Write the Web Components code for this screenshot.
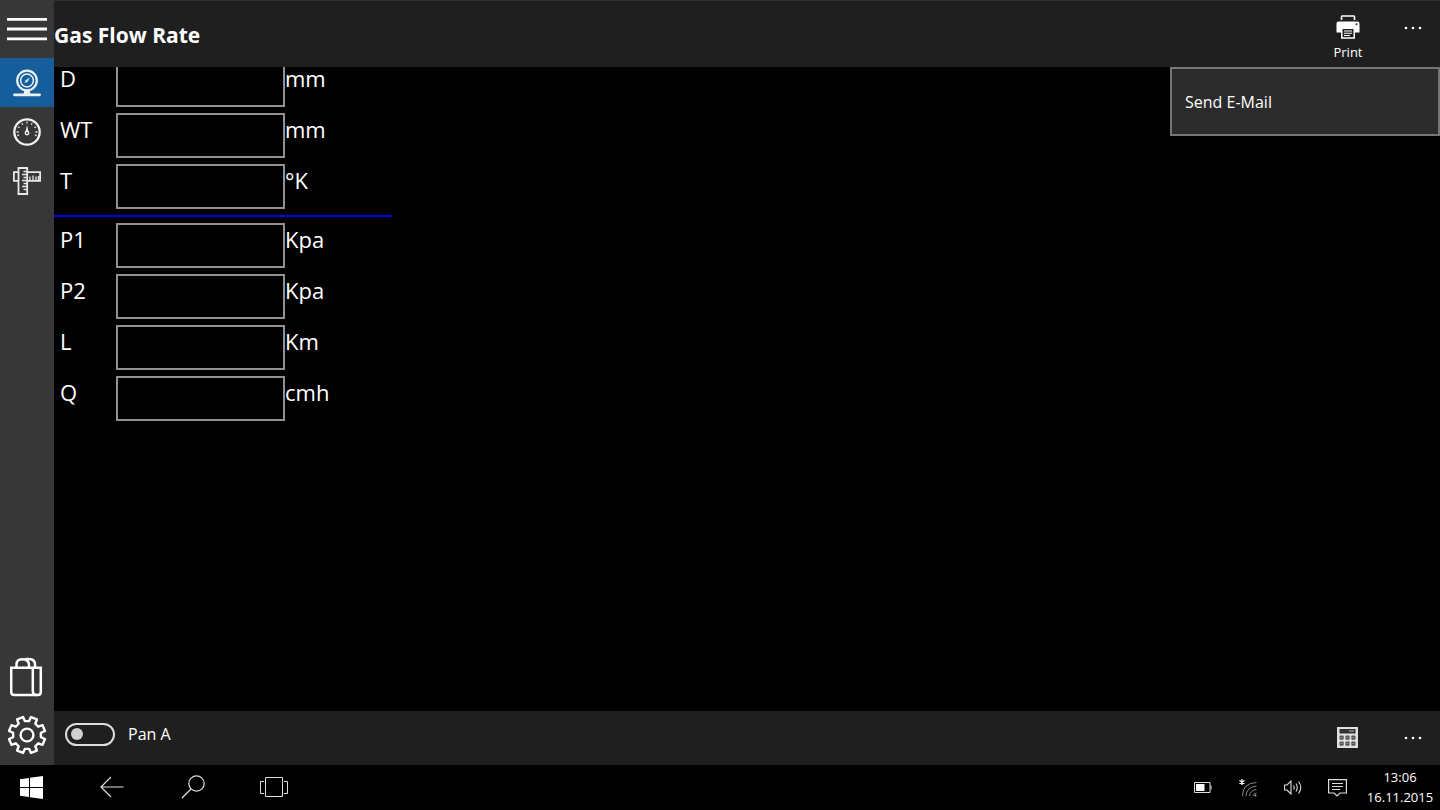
<!DOCTYPE html>
<html lang="en">
<head>
<meta charset="utf-8">
<title>Gas Flow Rate</title>
<style>
html,body{margin:0;height:100%;background:#000;color:#fff;font-family:"Open Sans","Noto Sans",sans-serif}
</style>
</head>
<body>
<gas-app></gas-app>
<script>
const define = (name, html, setup) => {
  const template = document.createElement('template');
  template.innerHTML = `<style>
    *{box-sizing:border-box}
    button{appearance:none;background:none;border:0;margin:0;padding:0;color:inherit;font:inherit;display:flex;align-items:center;justify-content:center}
    svg{display:block;flex:none}
  </style>` + html;
  customElements.define(name, class extends HTMLElement {
    constructor() {
      super();
      this.attachShadow({mode: 'open'}).append(template.content.cloneNode(true));
    }
    connectedCallback() { if (setup) setup(this, this.shadowRoot); }
  });
};

/* Outline of a cog: eight teeth with a notch at the top */
const cog = (c, outer, inner) => {
  const pts = [];
  for (let i = 0; i < 8; i++) {
    const mid = i * 45 + 22.5;
    [[-14, inner], [-10, outer], [10, outer], [14, inner]].forEach(([d, r]) => {
      const a = (mid + d - 90) * Math.PI / 180;
      pts.push((c + r * Math.cos(a)).toFixed(2) + ' ' + (c + r * Math.sin(a)).toFixed(2));
    });
  }
  return 'M' + pts.join('L') + 'Z';
};

/* Radial tick marks of a dial */
const ticks = (c, r1, r2, angles) => angles.map(deg => {
  const a = (deg - 90) * Math.PI / 180;
  const p = r => (c + r * Math.cos(a)).toFixed(2) + ' ' + (c + r * Math.sin(a)).toFixed(2);
  return 'M' + p(r1) + 'L' + p(r2);
}).join('');

define('nav-item', `
<style>
:host{display:block;height:49px}
:host([selected]){background:#165e9b}
:host([size=menu]){height:58px}
:host([size=large]){height:58px}
button{width:100%;height:100%}
</style>
<button><slot></slot></button>`,
(host, root) => root.querySelector('button').setAttribute('aria-label', host.getAttribute('name')));

define('nav-rail', `
<style>
:host{display:flex;flex-direction:column;width:54px;flex:none;background:#373737;padding-bottom:1px}
.grow{flex:1}
</style>
<nav-item name="Menu" size="menu">
  <svg width="40" height="24" viewBox="0 0 40 24"><path d="M0 2.4H40M0 12H40M0 21.8H40" stroke="#fff" stroke-width="2.8"/></svg>
</nav-item>
<nav-item name="Gas flow rate" selected>
  <svg width="28" height="28" viewBox="0 0 28 28" fill="none" stroke="#e9f2f9">
    <circle cx="14" cy="11.5" r="9.8" stroke-width="2.2"/><circle cx="14" cy="11.5" r="6.4" stroke-width="1.5"/>
    <path d="M11.5 14L12.3 11.2L17 8.3L14.8 12.9Z" fill="#b9d3e8" stroke="none"/>
    <path d="M11.5 21H16.5L17.5 25H10.5Z" fill="#e9f2f9" stroke="none"/><path d="M1.5 25.8H26.5" stroke-width="2.8" stroke-linecap="round"/>
  </svg>
</nav-item>
<nav-item name="Pressure">
  <svg width="28" height="28" viewBox="0 0 28 28" fill="none" stroke="#f2f2f2">
    <circle cx="14" cy="14" r="12.7" stroke-width="2.3"/>
    <path id="ticks" stroke-width="1.3" stroke="#ddd"/>
    <path d="M14 7L12.5 14H15.5Z" fill="#eee" stroke="none"/><circle cx="14" cy="15" r="1.7" stroke-width="1.4"/>
  </svg>
</nav-item>
<nav-item name="Dimensions">
  <svg width="28" height="28" viewBox="0 0 28 28" fill="none" stroke="#e8e8e8" stroke-width="1.8">
    <path d="M5.5 5.2H.9V13.8H5.5M14.2 5.2H27.1V13.8H14.2"/><path d="M5.5 1H14.2V27H5.5Z"/>
    <path d="M17 13.5V9.5M20 13.5V8.5M23 13.5V9.500M25.500 13.500V9M14 4.500H10.500M14 7.500H9M14 10.500H10.500M14 13.500H9M14 16.500H10.500M14 19.500H9M14 22.500H10.500" stroke-width="1.3"/>
  </svg>
</nav-item>
<div class="grow"></div>
<nav-item name="Store" size="large">
  <svg width="34" height="40" viewBox="1 0 34 40" fill="none" stroke="#fff" stroke-width="2.5">
    <path d="M2.200 10.800H31.800V35Q31.800 38 28.800 38H5.200Q2.200 38 2.200 35Z"/>
    <path d="M23.800 11V34Q23.800 38 27.800 38"/>
    <path d="M7.500 11V7.500Q7.500 2.200 13 2.200Q20 2.200 20 8V11M15.500 2.600Q17 1.800 20 2.100Q26 2.400 26 7.500V11"/>
  </svg>
</nav-item>
<nav-item name="Settings" size="large">
  <svg width="40" height="40" viewBox="0 0 40 40" fill="none" stroke="#fff" stroke-width="2.4" stroke-linejoin="round">
    <path id="cog"/><circle cx="20" cy="20" r="6.4"/>
  </svg>
</nav-item>`,
(host, root) => {
  root.getElementById('cog').setAttribute('d', cog(20, 18.4, 14));
  root.getElementById('ticks').setAttribute('d', ticks(14, 8.4, 10.4, [-110, -90, -60, -30, 0, 30, 60, 90, 110]));
});

define('more-button', `
<style>:host{display:block;width:54px}button{width:100%;height:54px}</style>
<button aria-label="More"><svg width="18" height="4" viewBox="0 0 18 4" fill="#fff"><circle cx="2" cy="2" r="1.3"/><circle cx="9" cy="2" r="1.3"/><circle cx="16" cy="2" r="1.3"/></svg></button>`);

define('title-bar', `
<style>
:host{display:flex;height:67px;flex:none;position:relative;z-index:1;background:#1f1f1f;border-top:1px solid #303030}
h1{flex:1;margin:0;font-size:21px;line-height:68px;font-weight:700}
.print{flex-direction:column;justify-content:flex-start;width:76px;padding-top:14px;font-size:13px;line-height:18px;gap:4px}
</style>
<h1>Gas Flow Rate</h1>
<button class="print">
  <svg width="24" height="24" viewBox="0 0 24 24">
    <path d="M5.5 5V1.8Q5.5 1 6.3 1H17.7Q18.5 1 18.5 1.8V5" fill="none" stroke="#fff" stroke-width="1.6"/>
    <path d="M2.5 6.5H21.5Q23.5 6.5 23.5 8.5V17.5H19V13H5V17.5H.5V8.5Q.5 6.5 2.5 6.5Z" fill="#fff"/>
    <circle cx="20.5" cy="9.3" r="1" fill="#333"/>
    <path d="M5.8 13.2H18.2V23H5.8Z" fill="#1f1f1f" stroke="#fff" stroke-width="1.5"/>
    <path d="M8 16H16M8 18.3H16M8 20.5H14" stroke="#fff" stroke-width="1.1"/>
  </svg>
  Print
</button>
<more-button></more-button>
<slot></slot>`);

define('fly-out', `
<style>
:host{position:absolute;top:100%;right:0;width:270px}
button{width:100%;height:69px;justify-content:flex-start;padding-left:13px;background:#2b2b2b;border:2px solid #767676;font-size:16px}
</style>
<button><slot></slot></button>`);

define('field-row', `
<style>
:host{display:grid;grid-template-columns:62px 169px auto;height:51px;padding-top:3px;font-size:22px;line-height:22px}
label,span{padding-top:5px}
label{padding-left:6px}
input{appearance:none;width:100%;height:45px;margin:0;padding:0 10px;background:#000;border:2px solid #919191;border-radius:0;color:#fff;font:inherit;outline:0}
</style>
<label for="value"></label><input id="value" type="text"><span><slot></slot></span>`,
(host, root) => root.querySelector('label').textContent = host.getAttribute('label'));

define('flow-form', `
<style>
:host{display:block;flex:1;min-height:0;overflow:hidden}
form{width:338px;margin-top:-8px}
hr{height:2px;margin:3px 0;border:0;background:#00e}
</style>
<form>
<field-row label="D">mm</field-row>
<field-row label="WT">mm</field-row>
<field-row label="T">°K</field-row>
<hr>
<field-row label="P1">Kpa</field-row>
<field-row label="P2">Kpa</field-row>
<field-row label="L">Km</field-row>
<field-row label="Q">cmh</field-row>
</form>`);

define('command-bar', `
<style>
:host{display:flex;align-items:center;height:54px;flex:none;background:#1f1f1f;padding-left:11px}
label{display:flex;flex:1;align-items:center;gap:13px;font-size:16px;line-height:24px;padding-bottom:8px}
input{appearance:none;display:flex;align-items:center;width:50px;height:23px;margin:0;padding-left:4px;border:2px solid #ddd;border-radius:12px}
input::before{content:"";width:12px;height:12px;border-radius:50%;background:#d0d0d0}
.calc{width:76px;height:54px}
</style>
<label><input type="checkbox" role="switch">Pan A</label>
<button class="calc" aria-label="Calculate">
  <svg width="22" height="22" viewBox="0 0 22 22">
    <path d="M0 0H21V21H0Z" fill="#e0e0e0"/><path d="M2.5 2H18.5V6.500H2.500Z" fill="#333"/><path d="M12 4H17" stroke="#888" stroke-width="1.500"/>
    <g fill="#555"><rect x="2.500" y="8.500" width="4.200" height="4.200" rx="1"/><rect x="8.400" y="8.500" width="4.200" height="4.200" rx="1"/><rect x="14.300" y="8.500" width="4.200" height="4.200" rx="1"/><rect x="2.500" y="14.500" width="4.200" height="4.200" rx="1"/><rect x="8.400" y="14.500" width="4.200" height="4.200" rx="1"/><rect x="14.300" y="14.500" width="4.200" height="4.200" rx="1"/></g>
    <path d="M3.500 10.500H5.700M9.400 10.500H11.600M15.300 10.500H17.500M3.500 16.500H5.700M9.400 16.500H11.600M15.300 16.500H17.500" stroke="#888"/>
  </svg>
</button>
<more-button></more-button>`);

define('task-bar', `
<style>
:host{display:flex;height:45px;flex:none;background:#000}
.apps{display:flex;gap:19px;flex:1}
.apps button{width:62px;padding-bottom:1px}
.tray{display:flex}
.tray button{width:45px}
.tray .clock{width:80px;flex-direction:column;font-size:13px;line-height:20px;padding-bottom:1px}
</style>
<div class="apps">
  <button aria-label="Start"><svg width="23" height="23" viewBox="0 0 23 23" fill="#fff"><path d="M0 3.2L9 2V11H0ZM10 1.8L23 0V11H10ZM0 12H9V21L0 19.8ZM10 12H23V23L10 21.2Z"/></svg></button>
  <button aria-label="Back"><svg width="24" height="22" viewBox="0 0 24 22" fill="none" stroke="#ddd" stroke-width="1.2"><path d="M23.5 11H1.5M11 1L1 11L11 21"/></svg></button>
  <button aria-label="Search"><svg width="24" height="24" viewBox="0 0 24 24" fill="none" stroke="#ddd" stroke-width="1.2"><circle cx="15.5" cy="8.5" r="7.7"/><path d="M10 14L1 23"/></svg></button>
  <button aria-label="Task view"><svg width="28" height="20" viewBox="0 0 28 20" fill="none" stroke="#ddd"><path d="M5.5.5H22.5V19.5H5.5ZM4 4.5H.5V16.5H4M24 4.5H27.5V16.5H24"/></svg></button>
</div>
<div class="tray">
  <button aria-label="Battery"><svg width="18" height="11" viewBox="0 0 18 11"><path d="M.5.5H16V10.5H.5Z" fill="none" stroke="#ddd"/><path d="M2 2H10.5V9H2Z" fill="#fff"/><path d="M17 3.5V7.5" stroke="#ddd"/></svg></button>
  <button aria-label="Network"><svg width="18" height="18" viewBox="0 0 18 18" fill="none" stroke="#888"><path d="M3.500 17Q3.500 4 17.500 3.500M7 17Q7.500 8 17.500 7M10.500 17Q11 11.500 17.500 10.500M14 17Q14.500 14.500 17.500 14"/><circle cx="16.500" cy="16.500" r="1" fill="#aaa" stroke="none"/><path d="M3 0V6M.4 1.500L5.600 4.500M5.600 1.500L.4 4.500" stroke="#fff" stroke-width="1.200"/></svg></button>
  <button aria-label="Volume"><svg width="18" height="15" viewBox="0 0 18 15" fill="none" stroke="#ddd" stroke-width="1.1"><path d="M.6 5H3L7 1V14L3 10H.6Z"/><path d="M9.500 5.500Q11 7.500 9.500 9.500M12 3.500Q14.500 7.500 12 11.500M14.500 1.500Q19 7.500 14.500 13.500"/></svg></button>
  <button aria-label="Notifications"><svg width="19" height="18" viewBox="0 0 19 18" fill="none" stroke="#ddd" stroke-width="1.200"><path d="M.6.6H18.400V14H12L9 17L6 14H.6Z"/><path d="M4 4.500H15M4 7.500H15M4 10.500H12"/></svg></button>
  <button class="clock"><span>13:06</span><span>16.11.2015</span></button>
</div>`);

define('gas-app', `
<style>
:host{display:flex;flex-direction:column;height:100vh}
.body{display:flex;flex:1;min-height:0}
main{display:flex;flex-direction:column;flex:1;min-width:0}
</style>
<div class="body">
  <nav-rail></nav-rail>
  <main>
    <title-bar><fly-out>Send E-Mail</fly-out></title-bar>
    <flow-form></flow-form>
    <command-bar></command-bar>
  </main>
</div>
<task-bar></task-bar>`);
</script>
</body>
</html>
